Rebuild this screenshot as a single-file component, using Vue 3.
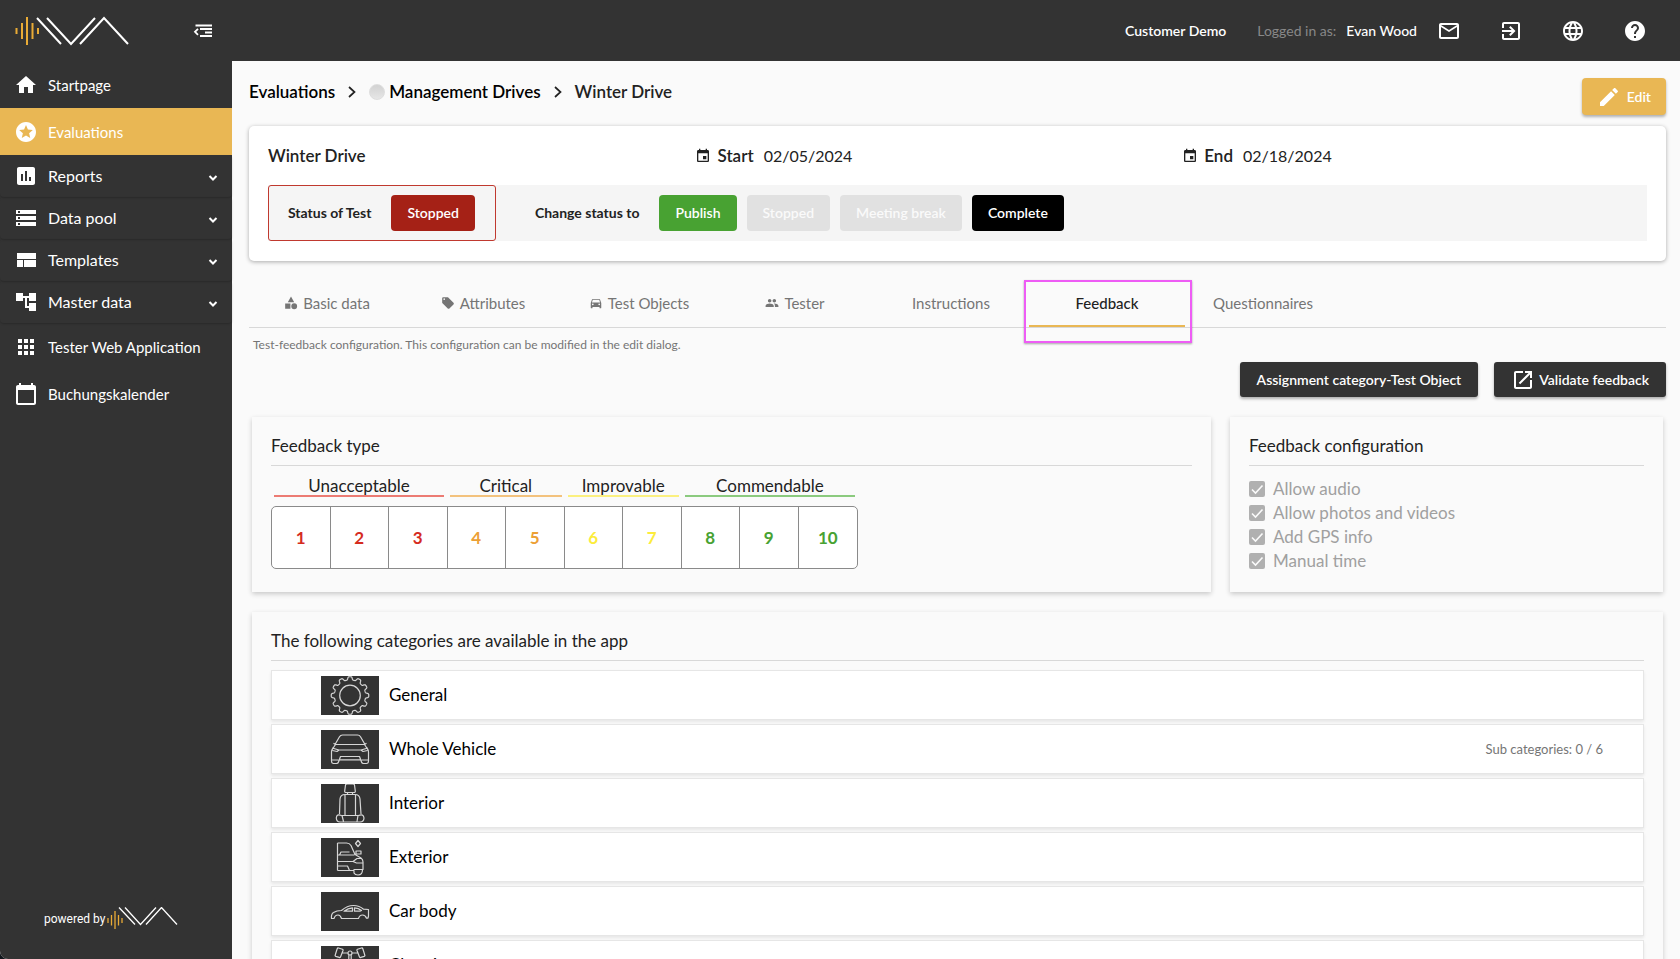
<script setup>
const icons = {
  home: 'M10 20v-6h4v6h5v-8h3L12 3 2 12h3v8z',
  stars: 'M11.99 2C6.47 2 2 6.48 2 12s4.47 10 9.99 10C17.52 22 22 17.52 22 12S17.52 2 11.99 2zm4.24 16L12 15.45 7.77 18l1.12-4.81-3.73-3.23 4.92-.42L12 5l1.92 4.53 4.92.42-3.73 3.23L16.23 18z',
  chart: 'M19 3H5c-1.1 0-2 .9-2 2v14c0 1.1.9 2 2 2h14c1.1 0 2-.9 2-2V5c0-1.1-.9-2-2-2zM9 17H7v-7h2v7zm4 0h-2V7h2v10zm4 0h-2v-4h2v4z',
  storage: 'M2 20h20v-4H2v4zm2-3h2v2H4v-2zM2 4v4h20V4H2zm4 3H4V5h2v2zm-4 7h20v-4H2v4zm2-3h2v2H4v-2z',
  layout: 'M3 19h6v-7H3v7zm7 0h12v-7H10v7zM3 5v6h19V5H3z',
  tree: 'M22 11V3h-7v3H9V3H2v8h7V8h2v10h4v3h7v-8h-7v3h-2V8h2v3z',
  apps: 'M4 8h4V4H4v4zm6 12h4v-4h-4v4zm-6 0h4v-4H4v4zm0-6h4v-4H4v4zm6 0h4v-4h-4v4zm6-10v4h4V4h-4zm-6 4h4V4h-4v4zm6 6h4v-4h-4v4zm0 6h4v-4h-4v4z',
  calendar: 'M20 3h-1V1h-2v2H7V1H5v2H4c-1.1 0-2 .9-2 2v16c0 1.1.9 2 2 2h16c1.1 0 2-.9 2-2V5c0-1.1-.9-2-2-2zm0 18H4V8h16v13z',
  mail: 'M20 4H4c-1.1 0-1.99.9-1.99 2L2 18c0 1.1.9 2 2 2h16c1.1 0 2-.9 2-2V6c0-1.1-.9-2-2-2zm0 14H4V8l8 5 8-5v10zm-8-7L4 6h16l-8 5z',
  exit: 'M10.09 15.59L11.5 17l5-5-5-5-1.41 1.41L12.67 11H3v2h9.67l-2.58 2.59zM19 3H5c-1.11 0-2 .9-2 2v4h2V5h14v14H5v-4H3v4c0 1.1.89 2 2 2h14c1.1 0 2-.9 2-2V5c0-1.1-.9-2-2-2z',
  globe: 'M11.99 2C6.47 2 2 6.48 2 12s4.47 10 9.99 10C17.52 22 22 17.52 22 12S17.52 2 11.99 2zm6.93 6h-2.95c-.32-1.25-.78-2.45-1.38-3.56 1.84.63 3.37 1.91 4.33 3.56zM12 4.04c.83 1.2 1.48 2.53 1.91 3.96h-3.82c.43-1.43 1.08-2.76 1.91-3.96zM4.26 14C4.1 13.36 4 12.69 4 12s.1-1.36.26-2h3.38c-.08.66-.14 1.32-.14 2 0 .68.06 1.34.14 2H4.26zm.82 2h2.95c.32 1.25.78 2.45 1.38 3.56-1.84-.63-3.37-1.9-4.33-3.56zm2.95-8H5.08c.96-1.66 2.49-2.93 4.33-3.56C8.81 5.55 8.35 6.75 8.03 8zM12 19.96c-.83-1.2-1.48-2.53-1.91-3.96h3.82c-.43 1.43-1.08 2.76-1.91 3.96zM14.34 14H9.66c-.09-.66-.16-1.32-.16-2 0-.68.07-1.35.16-2h4.68c.09.65.16 1.32.16 2 0 .68-.07 1.34-.16 2zm.25 5.56c.6-1.11 1.06-2.31 1.38-3.56h2.95c-.96 1.65-2.49 2.93-4.33 3.56zM16.36 14c.08-.66.14-1.32.14-2 0-.68-.06-1.34-.14-2h3.38c.16.64.26 1.31.26 2s-.1 1.36-.26 2h-3.38z',
  help: 'M12 2C6.48 2 2 6.48 2 12s4.48 10 10 10 10-4.48 10-10S17.52 2 12 2zm1 17h-2v-2h2v2zm2.07-7.75l-.9.92C13.45 12.9 13 13.5 13 15h-2v-.5c0-1.1.45-2.1 1.17-2.83l1.24-1.26c.37-.36.59-.86.59-1.41 0-1.1-.9-2-2-2s-2 .9-2 2H8c0-2.21 1.79-4 4-4s4 1.79 4 4c0 .88-.36 1.68-.93 2.25z',
  edit: 'M3 17.25V21h3.75L17.81 9.94l-3.75-3.75L3 17.25zM20.71 7.04c.39-.39.39-1.02 0-1.41l-2.34-2.34c-.39-.39-1.02-.39-1.41 0l-1.83 1.83 3.75 3.75 1.83-1.83z',
  event: 'M17 12h-5v5h5v-5zM16 1v2H8V1H6v2H5c-1.11 0-1.99.9-1.99 2L3 19c0 1.1.89 2 2 2h14c1.1 0 2-.9 2-2V5c0-1.1-.9-2-2-2h-1V1h-2zm3 18H5V8h14v11z',
  open: 'M19 19H5V5h7V3H5c-1.11 0-2 .9-2 2v14c0 1.1.89 2 2 2h14c1.1 0 2-.9 2-2v-7h-2v7zM14 3v2h3.59l-9.83 9.83 1.41 1.41L19 6.41V10h2V3h-7z',
  shapes: 'M12 1l5.5 9.5h-11zM2 13h9v9H2zM17.5 12.5a5 5 0 1 0 0 10 5 5 0 0 0 0-10z',
  tag: 'M21.41 11.58l-9-9C12.05 2.22 11.55 2 11 2H4c-1.1 0-2 .9-2 2v7c0 .55.22 1.05.59 1.42l9 9c.36.36.86.58 1.41.58.55 0 1.05-.22 1.41-.59l7-7c.37-.36.59-.86.59-1.41 0-.55-.23-1.06-.59-1.42zM5.5 7C4.67 7 4 6.33 4 5.5S4.67 4 5.5 4 7 4.67 7 5.5 6.33 7 5.5 7z',
  car: 'M18.92 6.01C18.72 5.42 18.16 5 17.5 5h-11c-.66 0-1.21.42-1.42 1.01L3 12v8c0 .55.45 1 1 1h1c.55 0 1-.45 1-1v-1h12v1c0 .55.45 1 1 1h1c.55 0 1-.45 1-1v-8l-2.08-5.99zM6.5 16c-.83 0-1.5-.67-1.5-1.5S5.67 13 6.5 13s1.5.67 1.5 1.5S7.33 16 6.5 16zm11 0c-.83 0-1.5-.67-1.5-1.5s.67-1.5 1.5-1.5 1.5.67 1.5 1.5-.67 1.5-1.5 1.5zM5 11l1.5-4.5h11L19 11H5z',
  group: 'M16 11c1.66 0 2.99-1.34 2.99-3S17.66 5 16 5c-1.66 0-3 1.34-3 3s1.34 3 3 3zm-8 0c1.66 0 2.99-1.34 2.99-3S9.66 5 8 5C6.34 5 5 6.34 5 8s1.34 3 3 3zm0 2c-2.33 0-7 1.17-7 3.5V19h14v-2.5c0-2.33-4.67-3.5-7-3.5zm8 0c-.29 0-.62.02-.97.05 1.16.84 1.97 1.97 1.97 3.45V19h6v-2.5c0-2.33-4.67-3.5-7-3.5z',
}

const groups = [
  { label: 'Reports', icon: 'chart' },
  { label: 'Data pool', icon: 'storage' },
  { label: 'Templates', icon: 'layout' },
  { label: 'Master data', icon: 'tree' },
]

const tools = [
  { label: 'Messages', icon: 'mail' },
  { label: 'Log out', icon: 'exit' },
  { label: 'Language', icon: 'globe' },
  { label: 'Help', icon: 'help' },
]

const tabs = [
  { label: 'Basic data', icon: 'shapes' },
  { label: 'Attributes', icon: 'tag' },
  { label: 'Test Objects', icon: 'car' },
  { label: 'Tester', icon: 'group' },
  { label: 'Instructions' },
  { label: 'Feedback', active: true },
  { label: 'Questionnaires' },
]

const ratings = [
  { label: 'Unacceptable', tone: 'red', scores: [1, 2, 3] },
  { label: 'Critical', tone: 'orange', scores: [4, 5] },
  { label: 'Improvable', tone: 'yellow', scores: [6, 7] },
  { label: 'Commendable', tone: 'green', scores: [8, 9, 10] },
]

const options = ['Allow audio', 'Allow photos and videos', 'Add GPS info', 'Manual time']

// Outline of a twelve-toothed gear with softened tooth edges.
function gear(cx, cy) {
  const pts = []
  for (let i = 0; i < 360; i++) {
    const a = (i / 360) * Math.PI * 2
    const r = 17.2 + 1.6 * Math.tanh(2.4 * Math.cos(12 * a))
    pts.push((cx + r * Math.sin(a)).toFixed(2) + ' ' + (cy - r * Math.cos(a)).toFixed(2))
  }
  return 'M' + pts.join('L') + 'Z'
}

const categories = [
  { name: 'General', art: gear(29, 19.5) + 'M39.3 19.5a10.3 10.3 0 1 1-20.6 0a10.3 10.3 0 1 1 20.6 0' },
  { name: 'Whole Vehicle', sub: 'Sub categories: 0 / 6', art: 'M14 14.5L18.5 6.8Q19.5 5 21.5 5H36.5Q38.5 5 39.5 6.8L44 14.5M14.5 14.5H43.5M12.5 13.2L14.5 14.5L11.5 19Q10.5 20 10.5 22V31Q10.5 33.5 12.5 33.5H15.5Q17 33.5 17.5 32L19.5 26.5H38.5L40.5 32Q41 33.5 42.5 33.5H45.5Q47.5 33.5 47.5 31V22Q47.5 20 46.5 19L43.5 14.5L45.5 13.2M11 18L18 20L16 21.5L11.5 20.5M47 18L40 20L42 21.5L46.5 20.5M18 20H40M11 30H17.5M40.5 30H47M18.5 29.8H39.5' },
  { name: 'Interior', art: 'M24.5 1L23.7 7Q23.5 8.5 25 8.5H33Q34.5 8.5 34.3 7L33.5 1Q33.2 0 32 0H26Q24.8 0 24.5 1ZM26.5 8.5V10.5M31.5 8.5V10.5M24 10.5H34Q38.5 10.5 39 15L40 30M18.5 30L19 15Q19.5 10.5 24 10.5M24 10.5V32M34.5 10.5V32M20.5 31.5H37.5M20.5 31.5Q15.5 29.5 15.3 34Q15.5 38 19 38H39Q42.8 38 43 34Q42.5 29.5 37.5 31.5M21 31.5L22.5 37.5M37 31.5L36 37.5' },
  { name: 'Exterior', art: 'M16.5 5V32.5M16.5 5H25.5Q28.5 5 30 7.5L34 16.5L40 20Q42 21.5 42 24V31.5H32.5M16.5 17H33.5M18.5 17L20 14H28.5M16.5 23.5H32L36 20.5H40.5M32 23.5L35.5 25H41.5M16.5 28H26.5L28.5 32.5H16.5M28.5 32.5H33V35Q34 37 37 37Q41.5 37 41.5 31.5M35 13H40V16H35ZM37 2.5L39.5 5.5L37 8.5L34.5 5.5Z' },
  { name: 'Car body', art: 'M10.5 26.5Q10 22 12.5 20.5Q15.5 18.5 20.5 18.5Q26 13.5 32.5 13.5Q38.5 13.5 42.5 17.2L47.5 17.5V24L47 26.2H45.5Q44.5 23 41.5 23Q38.5 23 37.5 26.5H20.5Q19.5 23 17 23Q14 23 13 26.5ZM23 19.2Q27 16 31.5 15.8V19.2ZM33.5 15.8Q37.5 15.8 40.5 18.5L39 19.2H33.5Z' },
  { name: 'Chassis', art: 'M17.5 2L21.5 3.2Q22.3 3.5 22 4.5L19.5 11Q19.2 11.8 18.2 11.4L14.8 10.4Q13.8 10 14.2 9L16.2 2.8Q16.5 1.8 17.5 2ZM40.5 2L36.5 3.2Q35.7 3.5 36 4.5L38.5 11Q38.8 11.8 39.8 11.4L43.2 10.4Q44.2 10 43.8 9L41.8 2.8Q41.5 1.8 40.5 2ZM21.5 7H27M31 7H36.5M31 7a2 2 0 1 1-4 0a2 2 0 1 1 4 0M27.8 9V30M30.2 9V30M18 34H40' },
]
</script>

<template>
  <div class="shell">
    <aside class="sidebar">
      <div class="brand">
        <svg class="logo" width="114" height="30" viewBox="0 0 114 30" fill="none" role="img" aria-label="IVA">
          <path d="M1.5 12v6M7 7v16M12 1v28M17.5 7v16M23 12v6" stroke="#e9ab36" stroke-width="2" />
          <path d="M22 2L46 28M32 2L56 28L80 2M65 28L89 2L113 28" stroke="#fff" stroke-width="2" />
        </svg>
        <button class="plain" type="button" aria-label="Collapse menu">
          <svg width="20" height="14" viewBox="0 0 20 14" fill="none" stroke="#fff" stroke-width="1.8">
            <path d="M2.5 1.5H19M7 5H19M12 8.5H19M7 12H19" />
            <path d="M5 4.8L2 7.8L5 10.8" />
          </svg>
        </button>
      </div>
      <nav class="nav">
        <a class="item" href="#"><svg class="icon" viewBox="0 0 24 24"><path :d="icons.home" /></svg>Startpage</a>
        <a class="item current" href="#" aria-current="page"><svg class="icon" viewBox="0 0 24 24"><path :d="icons.stars" /></svg>Evaluations</a>
        <button v-for="g in groups" :key="g.label" class="item group" type="button" aria-expanded="false">
          <svg class="icon" viewBox="0 0 24 24"><path :d="icons[g.icon]" /></svg>{{ g.label }}
          <svg class="chevron" width="10" height="8" viewBox="0 0 10 8" fill="none"><path d="M1.5 2L5 5.5L8.5 2" stroke="#fff" stroke-width="2" /></svg>
        </button>
        <a class="item" href="#"><svg class="icon" viewBox="0 0 24 24"><path :d="icons.apps" /></svg>Tester Web Application</a>
        <a class="item" href="#"><svg class="icon" viewBox="0 0 24 24"><path :d="icons.calendar" /></svg>Buchungskalender</a>
      </nav>
      <footer class="powered">
        <span>powered by</span>
        <svg width="72" height="24" viewBox="0 0 72 24" fill="none" role="img" aria-label="IVA">
          <path d="M1 11v5M4.5 8v10.500M8 4v18M11.500 8v10.500M15 11v5" stroke="#e9ab36" stroke-width="1.3" />
          <path d="M12 .5L28 17.500M18 .5L33.500 17.500L49 .5M39 17.500L54.500 .5L70 17.500" stroke="#fff" stroke-width="1.300" />
        </svg>
      </footer>
    </aside>

    <div class="page">
      <header class="topbar">
        <span class="customer">Customer Demo</span>
        <span class="logged">Logged in as:</span>
        <span class="user">Evan Wood</span>
        <div class="tools">
          <button v-for="t in tools" :key="t.label" class="plain" type="button" :aria-label="t.label">
            <svg class="icon" viewBox="0 0 24 24"><path :d="icons[t.icon]" /></svg>
          </button>
        </div>
      </header>

      <main class="content">
        <div class="head">
          <nav class="crumbs" aria-label="Breadcrumb">
            <a href="#">Evaluations</a>
            <svg width="8" height="14" viewBox="0 0 8 14" fill="none" stroke="#222" stroke-width="1.700"><path d="M1 2L6.500 7L1 12" /></svg>
            <a href="#" class="drives"><i class="dot"></i>Management Drives</a>
            <svg width="8" height="14" viewBox="0 0 8 14" fill="none" stroke="#222" stroke-width="1.700"><path d="M1 2L6.500 7L1 12" /></svg>
            <span>Winter Drive</span>
          </nav>
          <button class="edit" type="button"><svg class="icon" viewBox="0 0 24 24"><path :d="icons.edit" /></svg>Edit</button>
        </div>

        <section class="summary">
          <div class="facts">
            <strong>Winter Drive</strong>
            <div class="date"><svg viewBox="0 0 24 24"><path :d="icons.event" /></svg><strong>Start</strong><span>02/05/2024</span></div>
            <div class="date"><svg viewBox="0 0 24 24"><path :d="icons.event" /></svg><strong>End</strong><span>02/18/2024</span></div>
          </div>
          <div class="status">
            <div class="now"><span>Status of Test</span><b class="chip stopped">Stopped</b></div>
            <span class="change">Change status to</span>
            <div class="actions">
              <button class="chip publish" type="button">Publish</button>
              <button class="chip" type="button" disabled>Stopped</button>
              <button class="chip" type="button" disabled>Meeting break</button>
              <button class="chip complete" type="button">Complete</button>
            </div>
          </div>
        </section>

        <div class="tabs" role="tablist">
          <button v-for="t in tabs" :key="t.label" class="tab" :class="{ active: t.active }" type="button" role="tab" :aria-selected="!!t.active">
            <svg v-if="t.icon" viewBox="0 0 24 24"><path :d="icons[t.icon]" /></svg>{{ t.label }}
          </button>
        </div>
        <p class="hint">Test-feedback configuration. This configuration can be modified in the edit dialog.</p>

        <div class="buttons">
          <button class="dark" type="button">Assignment category-Test Object</button>
          <button class="dark" type="button"><svg class="icon" viewBox="0 0 24 24"><path :d="icons.open" /></svg>Validate feedback</button>
        </div>

        <div class="panels">
          <section class="panel">
            <h2>Feedback type</h2>
            <div class="scale">
              <div v-for="r in ratings" :key="r.label" class="band" :class="[r.tone, 'span' + r.scores.length]">{{ r.label }}</div>
            </div>
            <div class="cells">
              <template v-for="r in ratings" :key="r.label">
                <span v-for="s in r.scores" :key="s" :class="r.tone">{{ s }}</span>
              </template>
            </div>
          </section>
          <section class="panel">
            <h2>Feedback configuration</h2>
            <div class="options">
              <label v-for="o in options" :key="o">
                <span class="tick">
                  <input type="checkbox" checked disabled />
                  <svg viewBox="0 0 16 16" fill="none"><path d="M3 8.500L6.500 12L13.500 4.500" stroke="#fafafa" stroke-width="1.600" /></svg>
                </span>{{ o }}
              </label>
            </div>
          </section>
        </div>

        <section class="panel list">
          <h2>The following categories are available in the app</h2>
          <ul>
            <li v-for="c in categories" :key="c.name">
              <svg class="thumb" viewBox="0 0 58 39" fill="none"><path :d="c.art" stroke="#d6d6d6" stroke-width="1.2" stroke-linejoin="round" /></svg>
              <span class="name">{{ c.name }}</span>
              <span v-if="c.sub" class="sub">{{ c.sub }}</span>
            </li>
          </ul>
        </section>
      </main>
    </div>
  </div>
</template>

<style>
body { margin: 0; background: #10161c; }
</style>

<style scoped>
* { box-sizing: border-box; }
.shell { display: flex; height: 100vh; overflow: hidden; border-bottom-left-radius: 8px; background: #fafafa; color: #222; font-family: Lato, "Open Sans", sans-serif; font-size: 17px; line-height: 24px; }
button { font: inherit; color: inherit; border: 0; background: none; padding: 0; cursor: pointer; }
a { color: inherit; text-decoration: none; }
svg { flex: none; display: block; }
.icon { width: 24px; height: 24px; fill: currentColor; }

.sidebar { flex: none; width: 232px; display: flex; flex-direction: column; background: #333; color: #fff; font-size: 15px; }
.brand { display: flex; align-items: center; justify-content: space-between; height: 61px; padding: 0 19px 0 15px; }
.nav { flex: 1; }
.item { display: flex; align-items: center; gap: 10px; width: 100%; height: 47px; padding: 0 14px; text-align: left; }
.item.current { background: #e9b754; }
.item.group { height: 42px; font-size: 16px; border-radius: 4px; box-shadow: 0 1px 2px rgba(0, 0, 0, .2); }
.chevron { margin: 4px 0 0 auto; }
.powered { display: flex; align-items: center; gap: 2px; padding: 0 0 28px 44px; font: 12px/24px Roboto, sans-serif; }

.page { flex: 1; min-width: 0; display: flex; flex-direction: column; }
.topbar { flex: none; display: flex; align-items: center; justify-content: flex-end; height: 61px; padding-right: 33px; background: #333; color: #fff; font-size: 14px; }
.customer { margin-right: 31px; font-weight: 600; }
.logged { margin-right: 10px; color: #888; }
.user { margin-right: 20px; font-weight: 500; }
.tools { display: flex; gap: 38px; }

.content { flex: 1; min-height: 0; overflow-y: auto; scrollbar-width: none; padding: 17px 14px 0 17px; }
.head { display: flex; align-items: flex-start; justify-content: space-between; }
.crumbs { display: flex; align-items: center; gap: 13px; height: 28px; font-weight: 600; }
.crumbs a { color: #000; }
.drives { display: flex; align-items: center; gap: 4px; }
.dot { width: 16px; height: 16px; border-radius: 50%; background: linear-gradient(#d2d2d2, #e6e6e6); border: 1px solid #dedede; }
.edit { display: flex; align-items: center; gap: 6px; height: 37px; padding: 0 15px; border-radius: 4px; background: #e9b754; color: #fff; font-size: 14px; font-weight: 600; box-shadow: 0 2px 3px rgba(0, 0, 0, .3); }

.summary { margin-top: 11px; padding: 18px 19px 20px; border-radius: 5px; background: #fff; box-shadow: 0 1px 4px rgba(0, 0, 0, .32); }
.facts { display: grid; grid-template-columns: 310fr 353fr 337fr; }
.facts strong { font-weight: 600; }
.date { display: flex; align-items: center; gap: 6px; }
.date svg { width: 16px; height: 16px; fill: #222; }
.date span { margin-left: 4px; font-size: 16px; }
.status { display: flex; align-items: center; margin-top: 17px; background: #f5f5f5; font-size: 14px; font-weight: 700; }
.now { display: flex; align-items: center; gap: 20px; height: 56px; padding: 0 20px 0 19px; border: 1px solid #c0392f; border-radius: 3px; }
.chip { display: flex; align-items: center; height: 36px; padding: 0 16px; border-radius: 4px; background: #e1e1e1; color: #fafafa; font-size: 14px; font-weight: 600; }
.chip.stopped { background: #a52116; color: #fff; }
.chip.publish { background: #48a232; color: #fff; }
.chip.complete { background: #000; color: #fff; }
.change { margin: 0 20px 0 39px; }
.actions { display: flex; gap: 10px; }

.tabs { display: flex; margin-top: 20px; border-bottom: 1px solid #d8d8d8; }
.tab { position: relative; display: flex; align-items: center; justify-content: center; gap: 5px; width: 156px; height: 46px; padding-bottom: 2px; color: #757575; font-size: 15px; }
.tab svg { width: 14px; height: 14px; fill: #757575; }
.tab.active { color: #222; font-weight: 500; border-bottom: 2px solid #e9b754; padding-bottom: 0; }
.tab.active::after { content: ""; position: absolute; inset: -1px -7px -18px -5px; border: 2px solid #ee5cf5; box-shadow: 0 1px 2px rgba(0, 0, 0, .35); }
.hint { margin: 8px 4px 0; color: #757575; font-size: 12px; line-height: 18px; }
.buttons { display: flex; justify-content: flex-end; gap: 16px; margin-top: 8px; }
.dark { display: flex; align-items: center; gap: 4px; height: 35px; padding: 0 17px; border-radius: 3px; background: #333; color: #fff; font-size: 14px; font-weight: 600; box-shadow: 0 2px 3px rgba(0, 0, 0, .3); }

.panels { display: grid; grid-template-columns: 897fr 405fr; gap: 19px; margin: 20px 3px 0; }
.panel { padding: 17px 19px 19px; background: #fafafa; box-shadow: 0 2px 5px rgba(0, 0, 0, .2); }
h2 { margin: 0; padding-bottom: 7px; border-bottom: 1px solid #d8d8d8; font-size: 17px; font-weight: 400; line-height: 24px; }
.scale { display: flex; width: 587px; max-width: 100%; margin-top: 7px; }
.band { margin: 0 3px; padding-top: 4px; border-bottom: 2px solid; text-align: center; line-height: 18px; }
.span2 { flex: 2 1 6px; }
.span3 { flex: 3 1 12px; }
.band.red { border-color: #ec7b73; }
.band.orange { border-color: #f3c27d; }
.band.yellow { border-color: #fbf07f; }
.band.green { border-color: #8bca7e; }
.cells { display: grid; grid-template-columns: repeat(10, 1fr); width: 587px; max-width: 100%; height: 63px; margin-top: 9px; border: 1px solid #8a8a8a; border-radius: 5px; background: #fff; }
.cells span { display: flex; align-items: center; justify-content: center; font-weight: 700; border-right: 1px solid #8a8a8a; }
.cells span:last-child { border-right: 0; }
.cells .red { color: #d52b1e; }
.cells .orange { color: #eca035; }
.cells .yellow { color: #fcec3c; }
.cells .green { color: #48a232; }
.options { display: flex; flex-direction: column; margin-top: 11px; color: #a0a0a0; }
.options label { display: flex; align-items: center; gap: 8px; }
.tick { display: grid; width: 16px; height: 16px; }
.tick > * { grid-area: 1 / 1; width: 16px; height: 16px; }
.tick input { appearance: none; margin: 0; border-radius: 2px; background: #b0b0b0; }

.list { margin: 20px 3px 0; }
ul { display: flex; flex-direction: column; gap: 4px; margin: 9px 0 0; padding: 0; list-style: none; }
li { display: flex; align-items: center; height: 50px; padding: 0 40px 0 49px; border: 1px solid #e6e6e6; background: #fff; color: #000; box-shadow: 0 2px 3px rgba(0, 0, 0, .08); }
.thumb { width: 58px; height: 39px; background: #333; }
.name { margin-left: 10px; }
.sub { margin-left: auto; color: #757575; font-size: 13px; }
</style>
